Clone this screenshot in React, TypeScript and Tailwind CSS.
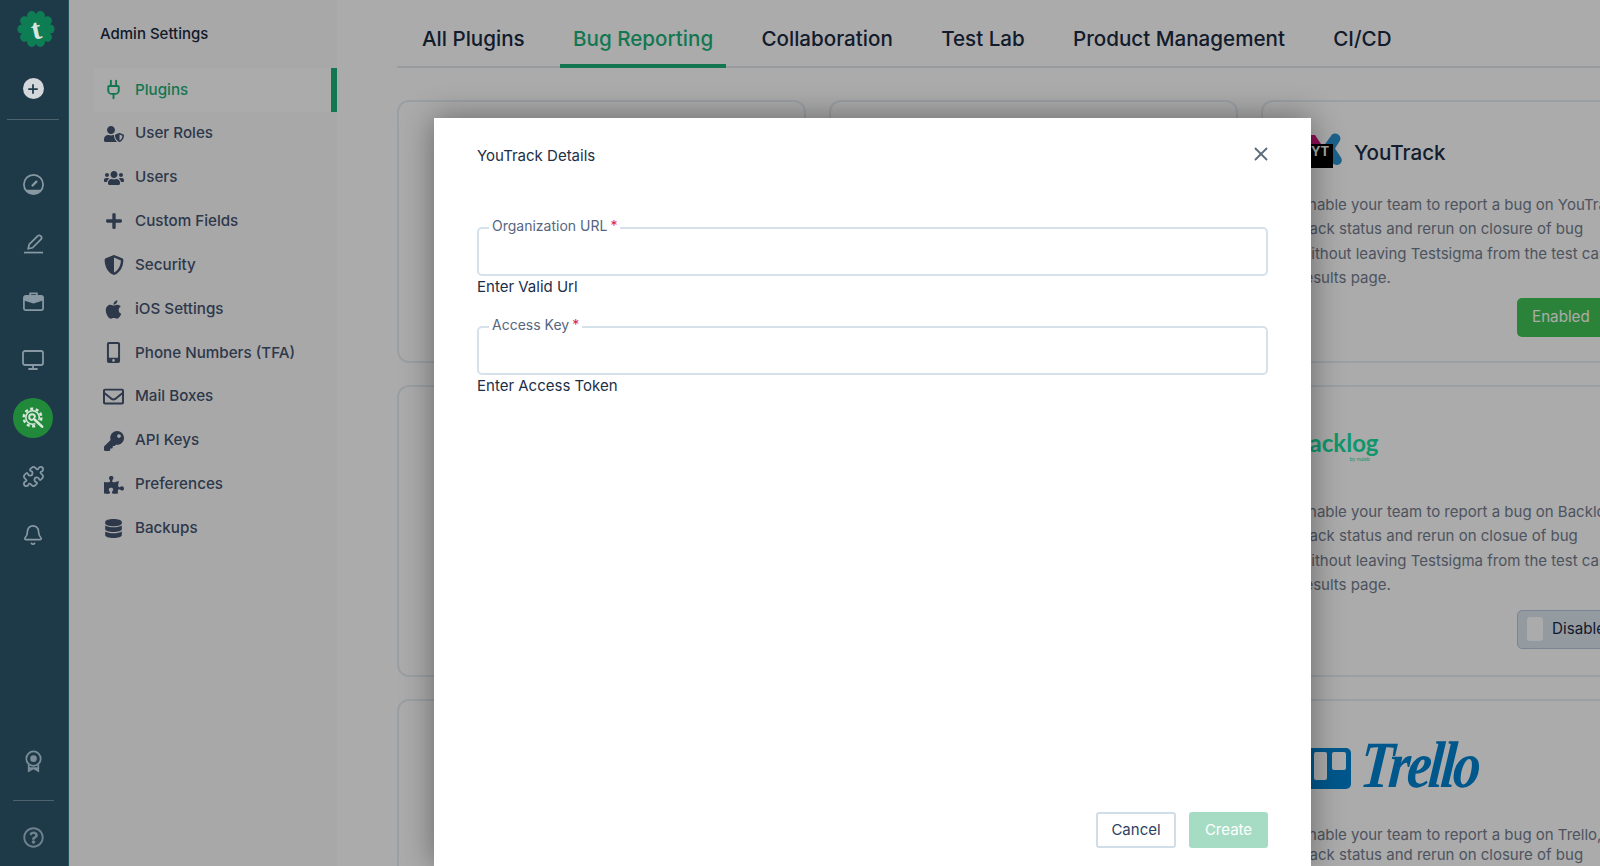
import { ReactNode } from 'react';
import {
  Plug,
  Plus,
  Monitor,
  Puzzle,
  Bell,
  X,
} from 'lucide-react';
import {
  FaUserShield,
  FaUsers,
  FaPlus,
  FaShieldAlt,
  FaApple,
  FaMobileAlt,
  FaRegEnvelope,
  FaKey,
  FaPuzzlePiece,
  FaDatabase,
  FaRegQuestionCircle,
} from 'react-icons/fa';

const NAV_ITEMS = [
  { label: 'Plugins', icon: <Plug size={21} strokeWidth={2.2} />, active: true },
  { label: 'User Roles', icon: <FaUserShield size={20} /> },
  { label: 'Users', icon: <FaUsers size={20} /> },
  { label: 'Custom Fields', icon: <FaPlus size={18} /> },
  { label: 'Security', icon: <FaShieldAlt size={20} /> },
  { label: 'iOS Settings', icon: <FaApple size={21} /> },
  { label: 'Phone Numbers (TFA)', icon: <FaMobileAlt size={21} /> },
  { label: 'Mail Boxes', icon: <FaRegEnvelope size={21} /> },
  { label: 'API Keys', icon: <FaKey size={20} /> },
  { label: 'Preferences', icon: <FaPuzzlePiece size={20} /> },
  { label: 'Backups', icon: <FaDatabase size={19} /> },
];

const TABS = ['All Plugins', 'Bug Reporting', 'Collaboration', 'Test Lab', 'Product Management', 'CI/CD'];

function Logo() {
  const bumps = Array.from({ length: 10 }, (_, i) => (i * Math.PI) / 5);
  return (
    <div className="relative h-[38px] w-[38px]">
      <svg viewBox="0 0 38 38" className="h-full w-full text-[#0e7d53]" fill="currentColor">
        <circle cx="19" cy="19" r="14.5" />
        {bumps.map((a) => (
          <circle key={a} cx={19 + 14 * Math.cos(a)} cy={19 + 14 * Math.sin(a)} r="4.6" />
        ))}
      </svg>
      <span className="absolute inset-0 flex -rotate-12 items-center justify-center font-['Liberation_Serif',serif] text-[29px] font-bold leading-none text-[#d8e6df]">
        t
      </span>
    </div>
  );
}

function GaugeIcon() {
  return (
    <svg viewBox="0 0 24 24" className="h-[23px] w-[23px]" fill="none" stroke="currentColor" strokeWidth="1.8">
      <circle cx="12" cy="12" r="10" />
      <path d="M4.2 17.5h15.6A10 10 0 0 1 12 22a10 10 0 0 1-7.8-4.5z" fill="currentColor" stroke="none" />
      <path d="M11 13l4-4" strokeWidth="2.4" strokeLinecap="round" />
    </svg>
  );
}

function PencilIcon() {
  return (
    <svg viewBox="0 0 24 24" className="h-[23px] w-[23px]" fill="none" stroke="currentColor" strokeWidth="1.8">
      <path d="M2 22.5h20" />
      <path d="M6.5 18.5l1-4.5L16.5 5a1.9 1.9 0 0 1 2.7 0l.8.8a1.9 1.9 0 0 1 0 2.7l-9 9z" />
    </svg>
  );
}

function BriefcaseIcon() {
  return (
    <svg viewBox="0 0 24 24" className="h-[23px] w-[23px]" fill="none" stroke="currentColor" strokeWidth="1.8">
      <path d="M8.5 6V3.5h7V6" />
      <rect x="2" y="6" width="20" height="15" rx="2" />
      <path d="M2 8a2 2 0 0 1 2-2h16a2 2 0 0 1 2 2v3l-10 3-10-3z" fill="currentColor" stroke="none" />
    </svg>
  );
}

function AwardIcon() {
  return (
    <svg viewBox="0 0 24 24" className="h-[23px] w-[23px]" fill="none" stroke="currentColor" strokeWidth="1.8">
      <circle cx="12" cy="9" r="7.5" />
      <circle cx="12" cy="9" r="3.4" fill="currentColor" stroke="none" />
      <path d="M7 15v7l5-3 5 3v-7M7 19h10" />
    </svg>
  );
}

function GearWrenchIcon() {
  return (
    <svg viewBox="0 0 24 24" className="h-[23px] w-[23px]" fill="none" stroke="#d9e8dc">
      <circle cx="11" cy="11" r="9.2" strokeWidth="2.6" strokeDasharray="3.2 2.6" />
      <circle cx="11" cy="11" r="7" strokeWidth="1.6" />
      <circle cx="10.5" cy="10.5" r="3" strokeWidth="2" />
      <path d="M12.5 12.5l8.5 8" stroke="#21893a" strokeWidth="5" />
      <path d="M12.5 12.5l8.5 8" strokeWidth="2.8" strokeLinecap="round" />
    </svg>
  );
}

function Sidebar() {
  const slot = 'flex h-[58.5px] items-center justify-center text-[#8899a3]';
  return (
    <aside className="relative z-30 flex h-full w-[69px] shrink-0 flex-col items-center border-r border-[#25525f] bg-[#1e3a49] pr-[2px]">
      <div className="ml-[5px] mt-[10px]">
        <Logo />
      </div>
      <div className="mt-[30px] flex h-[21px] w-[21px] items-center justify-center rounded-full bg-[#d3d6da] text-[#1e3a49]">
        <Plus size={14} strokeWidth={3} />
      </div>
      <div className="mb-[35px] mt-[20px] h-px w-[52px] bg-[#4d626d]" />
      <div className={slot}>
        <GaugeIcon />
      </div>
      <div className={slot}>
        <PencilIcon />
      </div>
      <div className={slot}>
        <BriefcaseIcon />
      </div>
      <div className={slot}>
        <Monitor size={24} strokeWidth={1.8} />
      </div>
      <div className="flex h-[58.5px] items-center justify-center">
        <div className="flex h-10 w-10 items-center justify-center rounded-full bg-[#21893a]">
          <GearWrenchIcon />
        </div>
      </div>
      <div className={slot}>
        <Puzzle size={23} strokeWidth={1.8} />
      </div>
      <div className={slot}>
        <Bell size={22} strokeWidth={1.8} />
      </div>
      <div className="mt-auto flex flex-col items-center">
        <div className="text-[#7b8d98]">
          <AwardIcon />
        </div>
        <div className="mb-[26px] mt-[27px] h-px w-[41px] bg-[#4d626d]" />
        <div className="mb-[18px] text-[#6e818d]">
          <FaRegQuestionCircle size={21} />
        </div>
      </div>
    </aside>
  );
}

function SettingsNav() {
  return (
    <nav className="h-full w-[268px] shrink-0 bg-[#fbfbfb]">
      <h2 className="pl-[31px] pt-[24px] text-[15px] font-medium leading-[20px] text-[#1a2a3f]">Admin Settings</h2>
      <ul className="ml-[25px] mt-[24px]">
        {NAV_ITEMS.map((item) => (
          <li
            key={item.label}
            className={
              item.active
                ? 'flex h-[43.85px] items-center border-r-[6px] border-[#1cb27a] bg-white text-[#1cb27a]'
                : 'flex h-[43.85px] items-center text-[#445470]'
            }
          >
            <span className="flex w-[41px] justify-center pr-[2px]">{item.icon}</span>
            <span className="text-[15.2px] font-medium">{item.label}</span>
          </li>
        ))}
      </ul>
    </nav>
  );
}

function Description({ lines, tight }: { lines: string[]; tight?: boolean }) {
  return (
    <div className={tight ? 'text-[15px] leading-[20px] text-[#737d8e]' : 'text-[15px] leading-[24.4px] text-[#737d8e]'}>
      {lines.map((line) => (
        <div key={line} className="whitespace-nowrap">
          {line}
        </div>
      ))}
    </div>
  );
}

function PluginCard({ children }: { children?: ReactNode }) {
  return <div className="overflow-hidden rounded-xl border-2 border-[#e6eef4] pl-[36px]">{children}</div>;
}

function YouTrackLogo() {
  return (
    <div className="relative h-[40px] w-[44px] shrink-0">
      <svg viewBox="0 0 44 40" className="h-full w-full">
        <path d="M6 2l10 0 8 12-8 8z" fill="#d1157c" />
        <path d="M33 1.500c4-3 10 1 8 6l-5 8 6 9c3 5-3 10-8 6l-14-11z" fill="#2a92d0" />
      </svg>
      <div className="absolute left-[2px] top-[11px] h-[24px] w-[32px] bg-black pl-[10px] text-[13px] font-bold leading-[15px] text-white">
        YT
      </div>
    </div>
  );
}

function PluginCards() {
  return (
    <div className="mt-[32px] grid grid-cols-[409px_409px_409px] grid-rows-[263px_292px_200px] gap-x-[23px] gap-y-[22px]">
      <PluginCard />
      <PluginCard />
      <PluginCard>
        <div className="mt-[31px] flex items-center">
          <YouTrackLogo />
          <span className="ml-[11px] text-[20.6px] font-medium text-[#1b2d45]">YouTrack</span>
        </div>
        <div className="mt-[20px]">
          <Description
            lines={[
              'Enable your team to report a bug on YouTrack,',
              'track status and rerun on closure of bug',
              'without leaving Testsigma from the test case',
              'results page.',
            ]}
          />
        </div>
        <div className="ml-[218px] mt-[7px] flex h-[39px] w-[110px] items-center rounded-[5px] bg-[#3fc354] pl-[15px] text-[15.2px] text-white">
          Enabled
        </div>
      </PluginCard>
      <PluginCard />
      <PluginCard />
      <PluginCard>
        <div className="-ml-[5px] mt-[34px] h-[44px] leading-[44px]">
          <span className="font-['Lato',sans-serif] text-[24px] font-bold text-[#17e0a0]">Backlog</span>
          <span className="ml-[-29px] align-[-9px] text-[5px] text-[#17e0a0]">by nulab</span>
        </div>
        <div className="mt-[35px]">
          <Description
            lines={[
              'Enable your team to report a bug on Backlog,',
              'track status and rerun on closue of bug',
              'without leaving Testsigma from the test case',
              'results page.',
            ]}
          />
        </div>
        <div className="ml-[218px] mt-[12px] flex h-[39px] w-[120px] items-center rounded-[5px] border border-[#b5c8da] bg-[#dbe6ef] pl-[9px] text-[15.2px] text-[#1a2a42]">
          <span className="mr-[9px] h-[24px] w-[16px] rounded-[3px] bg-white" />
          Disable
        </div>
      </PluginCard>
      <PluginCard />
      <PluginCard />
      <PluginCard>
        <div className="mt-[38px] flex h-[56px] items-end">
          <div className="mb-[6px] flex h-[41px] w-[52px] shrink-0 gap-[5px] rounded-[5px] bg-[#0082d0] pl-[15px] pt-[4px]">
            <span className="h-[28px] w-[13px] rounded-[2px] bg-white" />
            <span className="h-[18px] w-[14px] rounded-[2px] bg-white" />
          </div>
          <span className="ml-[7px] inline-block origin-bottom -skew-x-6 scale-y-[1.2] font-['Liberation_Serif',serif] text-[55px] font-bold italic leading-[50px] tracking-[-3px] text-[#0082d0]">
            Trello
          </span>
        </div>
        <div className="mt-[30px]">
          <Description
            lines={['Enable your team to report a bug on Trello,', 'track status and rerun on closure of bug']}
            tight
          />
        </div>
      </PluginCard>
    </div>
  );
}

function OutlinedField({ label, hint }: { label: string; hint: string }) {
  return (
    <div>
      <div className="relative h-[49px] rounded-[5px] border-2 border-[#d5e1eb]">
        <span className="absolute left-[10px] top-[-11px] bg-white px-[3px] text-[14px] leading-[16px] text-[#56667f]">
          {label}
          <span className="ml-[3px] text-[#e11d48]">*</span>
        </span>
      </div>
      <p className="mt-[1px] text-[15px] leading-[20px] text-[#1c2f47]">{hint}</p>
    </div>
  );
}

function DetailsModal() {
  return (
    <div className="absolute bottom-0 left-[434px] top-[118px] z-20 flex w-[877px] flex-col bg-white pb-[18px] pl-[43px] pr-[43px] pt-[28px] shadow-[0_0_30px_rgba(0,0,0,0.4)]">
      <div className="flex items-center justify-between">
        <h3 className="text-[15px] leading-[20px] text-[#1c2f47]">YouTrack Details</h3>
        <X size={22} strokeWidth={2} className="-mr-[4px] -mt-[4px] text-[#5d6b7c]" />
      </div>
      <div className="mt-[61px] flex flex-col gap-[29px]">
        <OutlinedField label="Organization URL" hint="Enter Valid Url" />
        <OutlinedField label="Access Key" hint="Enter Access Token" />
      </div>
      <div className="mt-auto flex justify-end gap-[13px]">
        <button className="h-[36px] w-[80px] rounded-[3px] border-2 border-[#d0deea] bg-white text-[15px] text-[#2d4263]">
          Cancel
        </button>
        <button className="h-[36px] w-[79px] rounded-[3px] bg-[#a6dcc4] text-[15px] text-white">Create</button>
      </div>
    </div>
  );
}

export default function App() {
  return (
    <div className="relative flex h-[866px] w-[1600px] overflow-hidden bg-white font-['Inter',sans-serif]">
      <Sidebar />
      <SettingsNav />
      <main className="min-w-0 flex-1 pl-[60px]">
        <div className="flex h-[68px] gap-[22.3px] border-b-2 border-[#e3e9ee] pl-[12px]">
          {TABS.map((tab) => (
            <div
              key={tab}
              className={
                tab === 'Bug Reporting'
                  ? 'h-[68px] border-b-4 border-[#1cb27a] px-[13px] pt-[24px] text-[20.6px] font-medium leading-[30px] text-[#1cb27a]'
                  : 'h-[68px] px-[13px] pt-[24px] text-[20.6px] font-medium leading-[30px] text-[#1a2a42]'
              }
            >
              {tab}
            </div>
          ))}
        </div>
        <PluginCards />
      </main>
      <div className="absolute inset-0 z-10 bg-black/33" />
      <DetailsModal />
    </div>
  );
}
